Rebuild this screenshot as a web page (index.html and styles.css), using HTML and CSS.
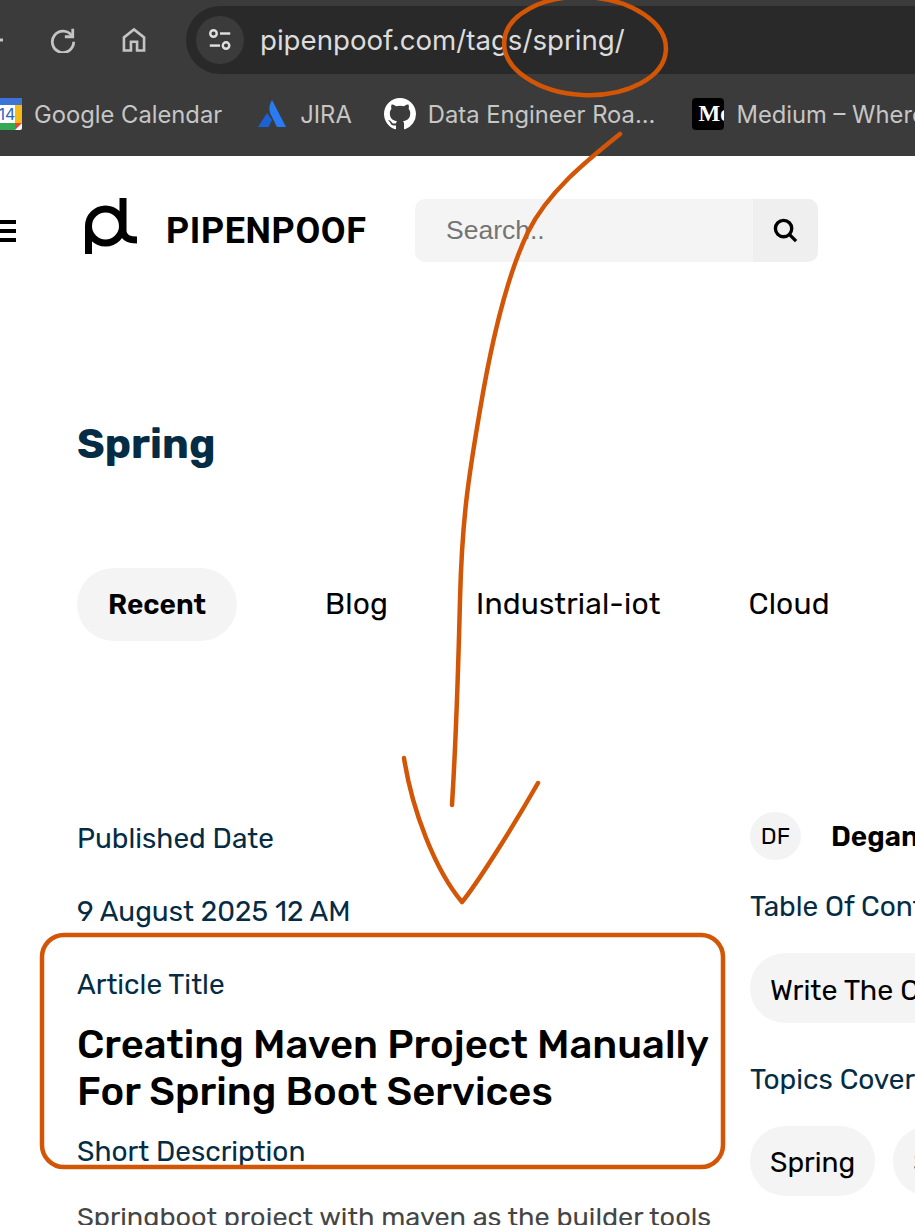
FILE: index.html
```html
<!DOCTYPE html>
<html lang="en">
<head>
<meta charset="utf-8">
<title>Spring - Pipenpoof</title>
<link rel="stylesheet" href="styles.css">
</head>
<body>
<div class="browser">
  <div class="toolbar">
    <svg class="tb-icon back" viewBox="0 0 50 28"><path d="M-2 14H3"/></svg>
    <svg class="tb-icon reload" viewBox="0 0 28 28"><path d="M23.500 9.500A11.500 11.500 0 1 0 25.500 16" /><path d="M24.500 2v8.500H16" /></svg>
    <svg class="tb-icon home" viewBox="0 0 32 32"><path d="M4.500 28V13L16 4l11.500 9v15h-8v-10h-7v10z" /></svg>
    <div class="address">
      <span class="tune"><svg viewBox="0 0 28 28"><circle cx="7" cy="7" r="3.500"/><path d="M14 7h11"/><path d="M3 20h11"/><circle cx="20.500" cy="20" r="3.500"/></svg></span>
      <span class="url">pipenpoof.com/tags/spring/</span>
    </div>
  </div>
  <div class="bookmarks">
    <div class="bm bm-cal">
      <svg class="bm-icon" viewBox="0 0 32 32"><rect width="32" height="32" rx="2" fill="#fff"/><path d="M0 0h32v7H0z" fill="#3b73d8"/><path d="M25 7h7v18h-7z" fill="#f5bb14"/><path d="M0 25h25v7H2a2 2 0 0 1-2-2z" fill="#34a853"/><path d="M25 25h7l-7 7z" fill="#ea4335"/><text x="17" y="22" text-anchor="middle" class="cal-num">14</text></svg>
      <span>Google Calendar</span>
    </div>
    <div class="bm bm-jira">
      <svg class="bm-icon-j" viewBox="0 0 28 28"><path d="M14 0c-3 5-3.500 10-1 15l6 12h9z" fill="#2a7bf2"/><path d="M9 13 0 27h10.500l3.500-7z" fill="#1a62d6"/></svg>
      <span>JIRA</span>
    </div>
    <div class="bm bm-gh">
      <svg class="bm-icon" viewBox="0 0 16 16"><path fill="#fff" d="M8 0C3.580 0 0 3.580 0 8c0 3.540 2.290 6.530 5.470 7.590.4.070.55-.17.55-.38 0-.19-.01-.82-.01-1.490-2.010.37-2.530-.49-2.690-.94-.09-.23-.48-.94-.82-1.130-.28-.15-.68-.52-.01-.53.63-.01 1.080.58 1.230.82.72 1.210 1.870.87 2.330.66.070-.52.28-.87.51-1.070-1.780-.2-3.640-.89-3.640-3.950 0-.87.31-1.590.82-2.150-.08-.2-.36-1.020.08-2.120 0 0 .67-.21 2.200.82.64-.18 1.320-.27 2-.27.68 0 1.360.09 2 .27 1.530-1.040 2.200-.82 2.200-.82.44 1.100.16 1.920.08 2.120.51.56.82 1.270.82 2.150 0 3.070-1.870 3.750-3.650 3.950.29.25.54.73.54 1.480 0 1.070-.01 1.930-.01 2.200 0 .21.15.46.55.38A8.013 8.013 0 0 0 16 8c0-4.420-3.580-8-8-8z"/></svg>
      <span>Data Engineer Roa...</span>
    </div>
    <div class="bm bm-med">
      <span class="med-icon"><span>Me</span></span>
      <span>Medium – Where good ideas find you</span>
    </div>
  </div>
</div>

<header class="site-header">
  <div class="hamburger"><i></i><i></i><i></i></div>
  <svg class="logo" viewBox="0 0 52 56"><circle cx="20.500" cy="28" r="17" /><path d="M3.500 28v28" /><path d="M38 0v33c0 5 4 9 14 9" /></svg>
  <span class="brand">PIPENPOOF</span>
  <div class="search">
    <span class="search-input">Search..</span>
    <span class="search-btn"><svg viewBox="0 0 26 26"><circle cx="11" cy="11" r="8.500"/><path d="M17 17l7 7"/></svg></span>
  </div>
</header>

<main class="page">
  <h1 class="title">Spring</h1>
  <nav class="tabs">
    <span class="tab active">Recent</span>
    <span class="tab tab-blog">Blog</span>
    <span class="tab tab-iot">Industrial-iot</span>
    <span class="tab tab-cloud">Cloud</span>
  </nav>
  <section class="columns">
    <div class="col-main">
      <div class="label">Published Date</div>
      <div class="label date">9 August 2025 12 AM</div>
      <div class="label art">Article Title</div>
      <h2 class="headline">Creating Maven Project Manually For Spring Boot Services</h2>
      <div class="label short">Short Description</div>
      <p class="desc">Springboot project with maven as the builder tools</p>
    </div>
    <aside class="col-side">
      <div class="author"><span class="avatar">DF</span><strong class="author-name">Deganath Fernando</strong></div>
      <div class="label toc">Table Of Contents</div>
      <div class="pills"><span class="pill pill-toc">Write The Code</span></div>
      <div class="label topics">Topics Covered</div>
      <div class="pills pills-topics"><span class="pill">Spring</span><span class="pill">Springboot</span></div>
    </aside>
  </section>
</main>

<svg class="annot" viewBox="0 0 915 1225">
  <ellipse cx="585" cy="46" rx="81" ry="49" transform="rotate(3 585 46)"/>
  <path d="M620 134C585 162 548 192 528 232C505 280 490 350 480 410C468 480 462 520 460 600C458 680 456 740 452 805"/>
  <path d="M404 758C412 810 435 870 462 902C476 885 510 832 538 783"/>
  <rect x="42" y="935" width="681" height="232" rx="22"/>
</svg>
</body>
</html>
```
FILE: styles.css
```css
* { box-sizing: border-box; }
html, body { margin: 0; padding: 0; }
body {
  width: 915px;
  height: 1225px;
  overflow: hidden;
  position: relative;
  background: #fff;
  font-family: Rubik, Roboto, "Liberation Sans", sans-serif;
  color: #000;
}
.browser {
  height: 156px;
  background: #3b3b3b;
  font-family: Inter, "Liberation Sans", sans-serif;
  overflow: hidden;
}
.toolbar {
  display: flex;
  align-items: center;
  height: 80px;
  padding: 6px 0;
}
.tb-icon {
  fill: none;
  stroke: #c4c4c4;
  stroke-width: 3;
  flex: none;
}
.back { width: 50px; height: 28px; }
.reload { width: 26px; height: 26px; }
.home { width: 28px; height: 28px; margin-left: 44px; }
.address {
  flex: none;
  width: 760px;
  height: 68px;
  margin-left: 38px;
  border-radius: 34px 0 0 34px;
  background: #292929;
  display: flex;
  align-items: center;
  padding-left: 10px;
}
.tune {
  width: 48px;
  height: 48px;
  border-radius: 50%;
  background: #3b3b3b;
  display: flex;
  align-items: center;
  justify-content: center;
}
.tune svg { width: 26px; height: 26px; fill: none; stroke: #e0e0e0; stroke-width: 2.600; }
.url {
  margin-left: 16px;
  font-size: 27.650px;
  color: #dcdcdc;
  white-space: nowrap;
}
.bookmarks {
  display: flex;
  align-items: center;
  height: 68px;
  margin-left: -10px;
  white-space: nowrap;
  font-size: 23.750px;
  color: #c6c6c6;
}
.bm { display: flex; align-items: center; flex: none; }
.bm-icon { width: 32px; height: 32px; flex: none; margin-right: 12px; }
.cal-num { font-size: 16px; fill: #2c62c4; font-family: Inter, sans-serif; }
.bm-jira { margin-left: 36px; }
.bm-icon-j { width: 28px; height: 28px; flex: none; margin-right: 14px; }
.bm-gh { margin-left: 32px; }
.bm-med { margin-left: 37px; }
.med-icon {
  width: 32px;
  height: 32px;
  border-radius: 4px;
  background: #000;
  color: #fff;
  margin-right: 12px;
  overflow: hidden;
  font: bold 23px/32px "Liberation Serif", serif;
  padding-left: 6px;
  flex: none;
}
.site-header {
  display: flex;
  align-items: center;
  height: 149px;
}
.hamburger { width: 16px; display: flex; flex-direction: column; gap: 5px; flex: none; }
.hamburger i { display: block; height: 4px; background: #000; }
.logo {
  width: 52px;
  height: 56px;
  flex: none;
  margin: 0 0 9px 69px;
  fill: none;
  stroke: #000;
  stroke-width: 7;
}
.brand {
  margin-left: 29px;
  width: 200px;
  font-size: 36px;
  font-weight: 700;
  letter-spacing: 0.6px;
  flex: none;
  white-space: nowrap;
  font-family: Roboto, sans-serif;
}
.search {
  flex: none;
  display: flex;
  width: 403px;
  height: 63px;
  margin-left: 49px;
  border-radius: 10px;
  overflow: hidden;
  background: #f4f4f4;
}
.search-input {
  flex: 1;
  padding-left: 31px;
  font: 26.500px/63px "Liberation Sans", sans-serif;
  color: #757575;
}
.search-btn {
  width: 65px;
  background: #efefef;
  display: flex;
  align-items: center;
  justify-content: center;
}
.search-btn svg { width: 25px; height: 25px; fill: none; stroke: #000; stroke-width: 3.500; }
.page { padding-left: 77px; }
.title {
  margin: 0;
  padding-top: 112px;
  font-size: 41.800px;
  line-height: 54px;
  font-weight: 700;
  color: #042c44;
}
.tabs {
  display: flex;
  align-items: center;
  height: 73px;
  margin-top: 97px;
  font-size: 30px;
  letter-spacing: 0.15px;
  white-space: nowrap;
}
.tab { flex: none; margin-bottom: 2px; }
.tab.active {
  width: 160px;
  height: 73px;
  margin-bottom: 0;
  border-radius: 37px;
  background: #f4f4f4;
  font-weight: 600;
  font-size: 28px;
  line-height: 73px;
  text-align: center;
  letter-spacing: 0;
}
.tab-blog { margin-left: 88px; }
.tab-iot { margin-left: 88px; }
.tab-cloud { margin-left: 88px; }
.columns {
  display: grid;
  grid-template-columns: 633px 500px;
  column-gap: 40px;
  margin-top: 163px;
  white-space: nowrap;
}
.label {
  font-size: 28px;
  line-height: 36px;
  color: #042c44;
}
.col-main { padding-top: 17px; }
.date { margin-top: 37px; }
.art { margin-top: 37px; }
.headline {
  margin: 18px 0 0;
  font-size: 40px;
  line-height: 47px;
  font-weight: 500;
  white-space: normal;
  width: 640px;
}
.short { margin-top: 19px; }
.desc {
  margin: 29px 0 0;
  font-size: 27.100px;
  line-height: 36px;
  color: #454545;
}
.author { display: flex; align-items: center; height: 48px; margin-top: 8px; }
.avatar {
  width: 51px;
  height: 48px;
  border-radius: 50%;
  background: #f3f3f3;
  text-align: center;
  font-size: 23px;
  line-height: 48px;
  flex: none;
}
.author-name { margin-left: 30px; font-size: 28px; font-weight: 600; }
.toc { margin-top: 29px; }
.pills { display: flex; gap: 18px; margin-top: 28px; }
.pill {
  flex: none;
  height: 70px;
  padding: 0 20px;
  border-radius: 35px;
  background: #f4f4f4;
  font-size: 28px;
  line-height: 74px;
}
.pill-toc { font-size: 28.600px; }
.topics { margin-top: 39px; }
.pills-topics { margin-top: 28px; }
.annot {
  position: absolute;
  left: 0;
  top: 0;
  width: 915px;
  height: 1225px;
  pointer-events: none;
  fill: none;
  stroke: #d25606;
  stroke-width: 4.500;
  stroke-linecap: round;
  stroke-linejoin: round;
}
```
